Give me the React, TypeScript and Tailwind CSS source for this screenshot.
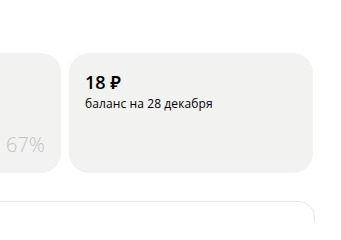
import React from "react";

export default function App() {
  return (
    <div
      className="h-[222px] w-[341px] overflow-hidden bg-white"
      style={{ fontFamily: '"Open Sans", "Noto Sans", sans-serif' }}
    >
      <div className="flex justify-end gap-2 overflow-hidden pt-[53px] pr-[28px]">
        <div className="flex h-[120px] w-[244px] shrink-0 items-end justify-end rounded-[20px] bg-[#f2f2f1] p-4">
          <span className="text-[20px] leading-6 font-light text-[#c2c2c2]">
            67%
          </span>
        </div>
        <div className="flex h-[120px] w-[244px] shrink-0 flex-col rounded-[20px] bg-[#f2f2f1] p-4">
          <span className="mt-px text-[18px] leading-6 font-semibold text-black">
            18 ₽
          </span>
          <span className="mt-[2px] text-[12px] leading-4 tracking-[0.1px] text-black">
            баланс на 28 декабря
          </span>
        </div>
      </div>
      <div className="flex justify-end overflow-hidden pt-[28px] pr-[26px]">
        <div className="h-[80px] w-[500px] shrink-0 rounded-[16px] border border-[#e6e6e6] bg-white" />
      </div>
    </div>
  );
}
